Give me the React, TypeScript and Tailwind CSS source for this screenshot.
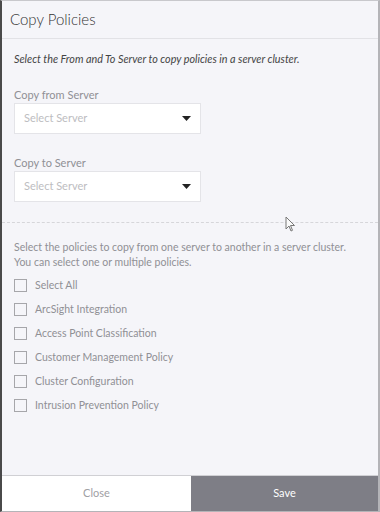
const policies = [
    "Select All",
    "ArcSight Integration",
    "Access Point Classification",
    "Customer Management Policy",
    "Cluster Configuration",
    "Intrusion Prevention Policy",
];

function ServerSelect({ label }: { label: string }) {
    return (
        <div className="flex flex-col">
            <span className="text-[11px] text-[#909095] leading-[14px] mb-[1px]">{label}</span>
            <div className="w-[187px] h-[31px] bg-white border border-[#e4e4e8] flex items-center justify-between pl-[9px] pr-[9px]">
                <span className="text-[11px] text-[#bdbdc1]">Select Server</span>
                <svg width="9" height="5" viewBox="0 0 9 5">
                    <path d="M0 0 L9 0 L4.5 5 Z" fill="#222" />
                </svg>
            </div>
        </div>
    );
}

export default function App() {
    return (
        <div
            className="relative w-[380px] h-[512px] bg-[#f5f5f9] border-l-2 border-l-[#4a4a4a] border-t border-t-[#c8c8cc] border-r-2 border-r-[#b4b4b8] border-b border-b-[#b4b4b8] flex flex-col"
            style={{ fontFamily: "Lato, 'Open Sans', sans-serif" }}
        >
            <div className="h-[38px] border-b border-[#e2e2e6] flex items-center pl-[8px]">
                <span className="text-[15px] text-[#333] font-light">Copy Policies</span>
            </div>

            <div className="flex-1 flex flex-col">
                <div className="px-[12px] pt-[13px]">
                    <p className="text-[10.8px] italic text-[#444] leading-[14px]">
                        Select the From and To Server to copy policies in a server cluster.
                    </p>
                    <div className="mt-[22px]">
                        <ServerSelect label="Copy from Server" />
                    </div>
                    <div className="mt-[22px]">
                        <ServerSelect label="Copy to Server" />
                    </div>
                </div>

                <div className="mt-[20px] border-t border-dashed border-[#d6d6da]" />

                <div className="px-[12px] pt-[17px]">
                    <p className="text-[10.5px] text-[#909095] leading-[15px]">
                        Select the policies to copy from one server to another in a server cluster.
                        <br />
                        You can select one or multiple policies.
                    </p>
                    <div className="flex flex-col gap-[11px] mt-[9px]">
                        {policies.map((p) => (
                            <label key={p} className="flex items-center gap-[8px]">
                                <span className="w-[13px] h-[13px] border border-[#a6a6aa] bg-[#f5f5f9]" />
                                <span className="text-[10.5px] text-[#909095] leading-[13px]">{p}</span>
                            </label>
                        ))}
                    </div>
                </div>
            </div>

            <div className="h-[36px] flex border-t border-[#d0d0d4]">
                <button className="w-[189px] bg-white text-[11px] text-[#a0a0a4]">Close</button>
                <button className="flex-1 bg-[#7e7e86] text-[11px] text-white">Save</button>
            </div>

            <svg
                className="absolute left-[283px] top-[215px]"
                width="10"
                height="16"
                viewBox="0 0 10 16"
            >
                <path d="M1 1 L1 13 L4 10 L6 15 L7.5 14.3 L5.5 9.5 L9.5 9.5 Z" fill="#fafafa" stroke="#777" strokeWidth="1" strokeLinejoin="round" />
            </svg>
        </div>
    );
}
